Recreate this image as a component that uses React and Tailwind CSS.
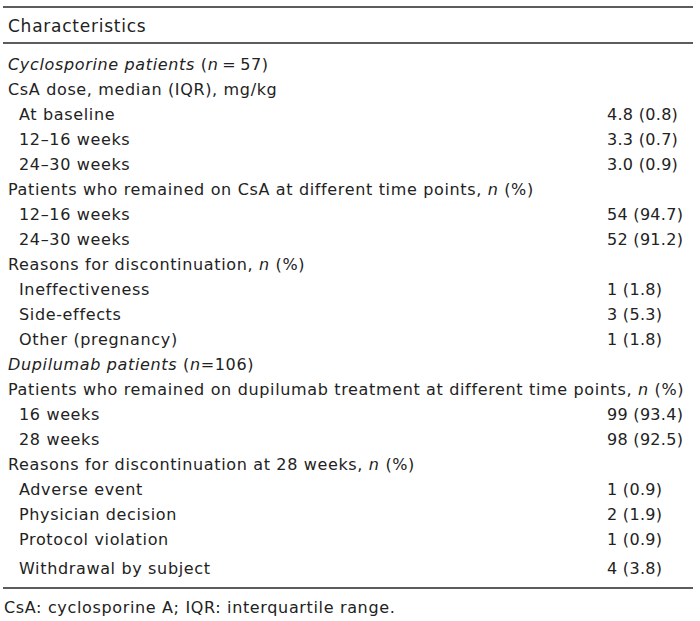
export default function App() {
  const rows = [
    { label: <><i>Cyclosporine patients</i> (<i>n</i>{'\u2009'}={'\u2009'}57)</> },
    { label: 'CsA dose, median (IQR), mg/kg' },
    { label: 'At baseline', value: '4.8 (0.8)', sub: true },
    { label: '12–16 weeks', value: '3.3 (0.7)', sub: true },
    { label: '24–30 weeks', value: '3.0 (0.9)', sub: true },
    { label: <>Patients who remained on CsA at different time points, <i>n</i> (%)</> },
    { label: '12–16 weeks', value: '54 (94.7)', sub: true },
    { label: '24–30 weeks', value: '52 (91.2)', sub: true },
    { label: <>Reasons for discontinuation, <i>n</i> (%)</> },
    { label: 'Ineffectiveness', value: '1 (1.8)', sub: true },
    { label: 'Side-effects', value: '3 (5.3)', sub: true },
    { label: 'Other (pregnancy)', value: '1 (1.8)', sub: true },
    { label: <><i>Dupilumab patients</i> (<i>n</i>=106)</> },
    { label: <>Patients who remained on dupilumab treatment at different time points, <i>n</i> (%)</> },
    { label: '16 weeks', value: '99 (93.4)', sub: true },
    { label: '28 weeks', value: '98 (92.5)', sub: true },
    { label: <>Reasons for discontinuation at 28 weeks, <i>n</i> (%)</> },
    { label: 'Adverse event', value: '1 (0.9)', sub: true },
    { label: 'Physician decision', value: '2 (1.9)', sub: true },
    { label: 'Protocol violation', value: '1 (0.9)', sub: true },
    { label: 'Withdrawal by subject', value: '4 (3.8)', sub: true, last: true },
  ]

  return (
    <div className="min-h-[621px] bg-white text-[#222] font-['DejaVu_Sans',Verdana,sans-serif]">
      <div className="ml-[3px] w-[690px] pt-[6px]">
        {/* header */}
        <div className="border-t-2 border-b-2 border-[#5c5c5c] h-[38px] flex items-center pt-[3px] pl-[5px] text-[17px] tracking-[0.75px]">
          Characteristics
        </div>

        {/* body */}
        <div className="pt-2 pb-[6px] border-b-2 border-[#5c5c5c] text-[16px] tracking-[0.65px]">
          {rows.map((r, i) => (
            <div key={i}
              className={`grid grid-cols-[1fr_86px] h-[25px] items-center whitespace-nowrap ${r.last ? 'mt-1' : ''}`}>
              <span className={r.sub ? 'pl-[16px]' : 'pl-[5px]'}>{r.label}</span>
              <span className="tracking-[0.3px]">{r.value}</span>
            </div>
          ))}
        </div>
      </div>

      <p className="mt-[9px] pl-[4px] text-[16px] tracking-[0.65px] leading-[20px]">
        CsA: cyclosporine A; IQR: interquartile range.
      </p>
    </div>
  )
}
